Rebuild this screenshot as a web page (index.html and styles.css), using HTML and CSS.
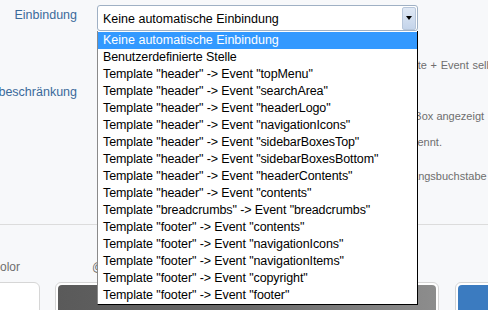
FILE: index.html
```html
<!DOCTYPE html>
<html lang="de">
<head>
<meta charset="utf-8">
<title>Einbindung</title>
<link rel="stylesheet" href="styles.css">
</head>
<body>
<div class="form">
  <div class="label l1">Einbindung</div>
  <div class="field">
    <div class="select-wrap">
      <div class="select">
        <span class="select-text">Keine automatische Einbindung</span>
        <span class="select-btn"><span class="tri"></span></span>
      </div>
      <ul class="dropdown">
        <li class="sel">Keine automatische Einbindung</li>
        <li>Benutzerdefinierte Stelle</li>
        <li>Template "header" -&gt; Event "topMenu"</li>
        <li>Template "header" -&gt; Event "searchArea"</li>
        <li>Template "header" -&gt; Event "headerLogo"</li>
        <li>Template "header" -&gt; Event "navigationIcons"</li>
        <li>Template "header" -&gt; Event "sidebarBoxesTop"</li>
        <li>Template "header" -&gt; Event "sidebarBoxesBottom"</li>
        <li>Template "header" -&gt; Event "headerContents"</li>
        <li>Template "header" -&gt; Event "contents"</li>
        <li>Template "breadcrumbs" -&gt; Event "breadcrumbs"</li>
        <li>Template "footer" -&gt; Event "contents"</li>
        <li>Template "footer" -&gt; Event "navigationIcons"</li>
        <li>Template "footer" -&gt; Event "navigationItems"</li>
        <li>Template "footer" -&gt; Event "copyright"</li>
        <li>Template "footer" -&gt; Event "footer"</li>
      </ul>
    </div>
    <p class="desc d1">Bei der Auswahl von „Benutzerdefinierte Stelle“, bitte das Template + Event selbst angeben.</p>
  </div>

  <div class="label l2">Gruppenbeschränkung</div>
  <div class="field">
    <div class="groups"></div>
    <p class="desc d2">Nur Benutzer der ausgewählten Benutzergruppen erhalten diese Box angezeigt</p>
    <p class="desc d3">Mehrere Benutzergruppen werden jeweils durch ein Komma getrennt.</p>
    <p class="desc d4">Groß- und Kleinschreibung beachten, insbesondere auch den Anfangsbuchstabe</p>
  </div>
</div>

<div class="section">
  <div class="colors">
    <div class="col c1">
      <div class="clabel">Text Color</div>
      <div class="swatch"><div class="fill white"></div></div>
    </div>
    <div class="col c2">
      <div class="clabel">@wcfButtonBackgroundColor</div>
      <div class="swatch"><div class="fill gray"></div></div>
    </div>
    <div class="col c3">
      <div class="clabel">&nbsp;</div>
      <div class="swatch"><div class="fill blue"></div></div>
    </div>
  </div>
</div>
</body>
</html>
```

FILE: styles.css
```css
html, body {
  margin: 0;
  padding: 0;
}
body {
  width: 488px;
  height: 310px;
  overflow: hidden;
  background: #f7f8fa;
  font-family: "Liberation Sans", Arial, sans-serif;
  font-size: 12.5px;
  color: #000;
}
.form {
  display: grid;
  grid-template-columns: 197px 1fr;
  column-gap: 20px;
  margin-left: -120px;
}
.label {
  text-align: right;
  color: #3b6a9a;
  font-size: 12.5px;
  line-height: 16px;
  white-space: nowrap;
}
.l1 { padding-top: 7px; }
.l2 { padding-top: 12px; }
.field {
  min-width: 0;
}
.select-wrap {
  position: relative;
  width: 321px;
  padding-top: 5px;
}
.select {
  height: 24px;
  border: 1px solid #9fb0c4;
  border-radius: 3px;
  background: #fff;
  display: flex;
  align-items: center;
  justify-content: space-between;
  padding-left: 5px;
  padding-right: 1px;
}
.select-text {
  line-height: 16px;
  padding-top: 2px;
}
.select-btn {
  width: 12px;
  height: 21px;
  border: 1px solid #b7c6da;
  border-radius: 2px;
  background: linear-gradient(#dfe8f5, #c4d4ea);
  display: flex;
  align-items: center;
  justify-content: center;
}
.tri {
  width: 0;
  height: 0;
  border-left: 3.5px solid transparent;
  border-right: 3.5px solid transparent;
  border-top: 4px solid #000;
}
.dropdown {
  position: absolute;
  left: 0;
  top: 31px;
  width: 319px;
  margin: 0;
  padding: 1px 0 0;
  list-style: none;
  background: #fff;
  border-left: 1px solid #8a8a8a;
  border-right: 1px solid #000;
  border-bottom: 1px solid #000;
  z-index: 5;
}
.dropdown li {
  height: 17px;
  line-height: 17px;
  padding-left: 5px;
  white-space: nowrap;
  letter-spacing: -0.1px;
}
.dropdown li.sel {
  background: #3399ff;
  color: #fff;
  letter-spacing: 0;
}
.desc {
  margin: 0;
  font-size: 11px;
  line-height: 14px;
  color: #6e6e6e;
  white-space: nowrap;
}
.d1 { margin-top: 27px; word-spacing: 0.6px; }
.groups {
  height: 32px;
  width: 200px;
}
.d2 { margin-top: 5px; }
.d3 { margin-top: 12px; word-spacing: 0.8px; }
.d4 { margin-top: 20px; word-spacing: -0.6px; }

.section {
  margin-top: 41px;
  border-top: 1px solid #dcdcdc;
  padding-top: 35px;
}
.colors {
  display: flex;
  margin-left: -60px;
}
.col {
  display: flex;
  flex-direction: column;
  flex-shrink: 0;
}
.c1 { width: 100px; margin-right: 15px; }
.c2 { width: 384px; margin-right: 16px; }
.c3 { width: 100px; }
.clabel {
  font-size: 12px;
  line-height: 14px;
  height: 14px;
  color: #6e6e6e;
  white-space: nowrap;
  margin-bottom: 8px;
}
.c1 .clabel { padding-left: 26px; }
.c2 .clabel { padding-left: 37px; }
.swatch {
  height: 40px;
  border: 1px solid #d6d6d6;
  border-radius: 6px;
  background: #fff;
  padding: 2px;
}
.fill {
  height: 100%;
  border-radius: 4px 4px 0 0;
}
.fill.white { background: #fff; }
.fill.gray { background: linear-gradient(90deg, #5a5a5a 0%, #6a6a6a 50%, #8d8d8d 100%); }
.fill.blue { background: #3b7bc0; }
```
